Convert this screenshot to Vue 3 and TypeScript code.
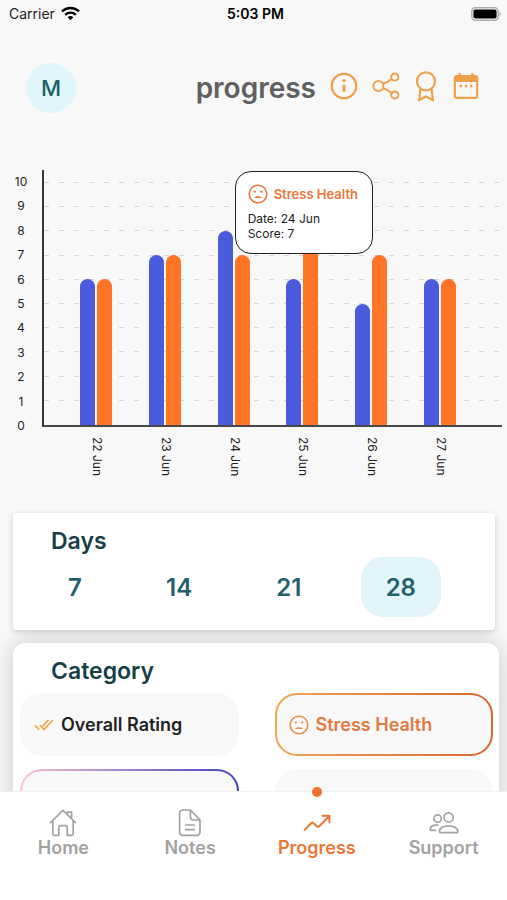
<script setup lang="ts">
import { ref } from 'vue'

interface DayEntry {
  date: string
  overall: number
  stress: number
}

const maxScore = 10
const ticks: number[] = Array.from({ length: maxScore + 1 }, (_, i) => maxScore - i)

const entries: DayEntry[] = [
  { date: '22 Jun', overall: 6, stress: 6 },
  { date: '23 Jun', overall: 7, stress: 7 },
  { date: '24 Jun', overall: 8, stress: 7 },
  { date: '25 Jun', overall: 6, stress: 8 },
  { date: '26 Jun', overall: 5, stress: 7 },
  { date: '27 Jun', overall: 6, stress: 6 },
]

const dayRanges: number[] = [7, 14, 21, 28]
const selectedRange = ref(28)
const selectedDate = ref('24 Jun')

const barHeight = (score: number) => ({ height: `${(score / maxScore) * 100}%` })
</script>

<template>
  <div class="app">
    <div class="status">
      <span class="carrier">
        Carrier
        <svg width="19" height="15" viewBox="0 0 19 15" fill="none" stroke="#000" stroke-width="2.4" aria-hidden="true">
          <path d="M1 5.4a12.2 12.2 0 0 1 17 0" />
          <path d="M4.2 8.8a7.6 7.6 0 0 1 10.6 0" />
          <path d="M9.5 14.2 6.6 11.3a4.2 4.2 0 0 1 5.8 0z" fill="#000" stroke="none" />
        </svg>
      </span>
      <span class="time">5:03 PM</span>
      <svg class="battery" width="31" height="14" viewBox="0 0 31 14" aria-hidden="true">
        <rect x="0.8" y="0.8" width="26.4" height="12.4" rx="3.6" fill="#fff" stroke="#aaa" stroke-width="1.4" />
        <rect x="2.4" y="2.4" width="23.2" height="9.2" rx="2" fill="#000" />
        <path d="M28.6 4.8c1.6.4 1.6 4 0 4.4z" fill="#aaa" />
      </svg>
    </div>

    <main class="content">
      <header class="header">
        <button class="avatar" type="button" aria-label="Profile">M</button>
        <h1 class="title">progress</h1>
        <div class="actions">
          <button type="button" aria-label="Information">
            <svg width="28" height="28" viewBox="0 0 28 28" fill="none" stroke="currentColor" stroke-width="2.2">
              <circle cx="14" cy="14" r="12.2" />
              <path d="M14 12.6v7.4" stroke-width="2.8" />
              <circle cx="14" cy="8.6" r="1.6" fill="currentColor" stroke="none" />
            </svg>
          </button>
          <button type="button" aria-label="Share">
            <svg width="28" height="28" viewBox="0 0 28 28" fill="none" stroke="currentColor" stroke-width="2">
              <circle cx="6.4" cy="14" r="5" />
              <circle cx="22.8" cy="5" r="3.6" />
              <circle cx="22.8" cy="23" r="3.6" />
              <path d="M11 11.8l4-1.6 4.8-3.2M11 16.2l4 1.6 4.8 3.2" />
            </svg>
          </button>
          <button type="button" aria-label="Awards">
            <svg width="24" height="32" viewBox="0 0 24 32" fill="none" stroke="currentColor" stroke-width="2.2">
              <circle cx="12" cy="11.4" r="9" />
              <path d="M6.4 18.6 5.2 30l6.8-3.4 6.8 3.4-1.2-11.4" />
            </svg>
          </button>
          <button type="button" aria-label="Calendar">
            <svg width="28" height="28" viewBox="-1 0 28 28" fill="none" stroke="currentColor" stroke-width="2.2">
              <rect x="1.8" y="4" width="22.4" height="21.8" rx="2" />
              <path d="M1.4 4h23.2v6H1.4z" fill="currentColor" stroke="none" />
              <path d="M6.6 1v4M19.4 1v4" />
              <path d="M6.6 14h2.4M11.8 14h2.4M17 14h2.4" stroke-width="2.4" />
            </svg>
          </button>
        </div>
      </header>

      <section class="chart" aria-label="Daily scores">
        <div class="y-axis">
          <span v-for="tick in ticks" :key="tick">{{ tick }}</span>
        </div>
        <div class="plot">
          <div class="grid-lines">
            <i v-for="tick in ticks" :key="tick" :class="{ base: tick === 0 }"></i>
          </div>
          <div class="groups">
            <div v-for="entry in entries" :key="entry.date" class="group" @click="selectedDate = entry.date">
              <div class="bar overall" :style="barHeight(entry.overall)"></div>
              <div class="bar stress" :style="barHeight(entry.stress)"></div>
              <div v-if="entry.date === selectedDate" class="tooltip">
                <div class="tooltip-title">
                  <svg width="20" height="20" viewBox="0 0 20 20" fill="none" stroke="currentColor" stroke-width="1.6">
                    <circle cx="10" cy="10" r="8.8" />
                    <circle cx="6.8" cy="7.6" r="1.2" fill="currentColor" stroke="none" />
                    <circle cx="13.2" cy="7.6" r="1.2" fill="currentColor" stroke="none" />
                    <path d="M6.2 14c1-1.6 2.4-1.8 3.8-1.8s2.8.2 3.8 1.8z" fill="currentColor" stroke="none" />
                  </svg>
                  Stress Health
                </div>
                <div>Date: {{ entry.date }}</div>
                <div>Score: {{ entry.stress }}</div>
              </div>
            </div>
          </div>
        </div>
        <div class="x-axis">
          <span v-for="entry in entries" :key="entry.date">{{ entry.date }}</span>
        </div>
      </section>

      <section class="card days">
        <h2>Days</h2>
        <div class="ranges">
          <button
            v-for="range in dayRanges"
            :key="range"
            type="button"
            :class="{ active: range === selectedRange }"
            :aria-pressed="range === selectedRange"
            @click="selectedRange = range"
          >
            {{ range }}
          </button>
        </div>
      </section>

      <section class="card category">
        <h2>Category</h2>
        <div class="categories">
          <button class="pill" type="button">
            <svg width="20" height="14" viewBox="0 0 20 14" fill="none" stroke="#eda63f" stroke-width="1.6">
              <path d="M1 7.4l4.4 4.4M5.8 7.2l4.2 4.4L19 2M8.4 8.4 14.4 2" />
            </svg>
            Overall Rating
          </button>
          <button class="pill orange" type="button" aria-pressed="true">
            <svg width="20" height="20" viewBox="0 0 20 20" fill="none" stroke="#e68f42" stroke-width="1.6">
              <circle cx="10" cy="10" r="8.8" />
              <circle cx="6.8" cy="7.6" r="1.1" fill="#e68f42" stroke="none" />
              <circle cx="13.2" cy="7.6" r="1.1" fill="#e68f42" stroke="none" />
              <path d="M6.2 14c1-1.6 2.4-1.8 3.8-1.8s2.8.2 3.8 1.8z" fill="#e68f42" stroke="none" />
            </svg>
            Stress Health
          </button>
          <button class="pill blue" type="button" aria-label="More"></button>
          <button class="pill" type="button" aria-label="More"></button>
        </div>
      </section>
    </main>

    <nav class="tabs">
      <a href="#home">
        <svg width="28" height="28" viewBox="0 0 28 28" fill="none" stroke="currentColor" stroke-width="1.7" stroke-linejoin="round" stroke-linecap="round">
          <path d="M1.4 13.6 14 1.4l12.6 12.2M3.8 11.6v13.2c0 1 .6 1.6 1.6 1.6h4.4v-8c0-1.2.6-1.8 1.8-1.8h4.8c1.2 0 1.8.6 1.8 1.8v8h4.4c1 0 1.6-.6 1.6-1.6V11.6M18.6 5.6V3.2h4v6.4" />
        </svg>
        Home
      </a>
      <a href="#notes">
        <svg width="28" height="28" viewBox="0 0 28 28" fill="none" stroke="currentColor" stroke-width="1.7" stroke-linejoin="round" stroke-linecap="round">
          <path d="M14.4 1H7.2C5 1 3.6 2.4 3.6 4.6v18.2c0 2.2 1.4 3.6 3.6 3.6h13.2c2.2 0 3.6-1.4 3.6-3.6V11zM14.4 1v7c0 2 1 3 3 3H24M9.6 16h8.8M9.6 20.6h8.8" />
        </svg>
        Notes
      </a>
      <a href="#progress" class="current" aria-current="page">
        <svg width="28" height="28" viewBox="0 0 28 28" fill="none" stroke="currentColor" stroke-width="2" stroke-linejoin="round">
          <path d="M1 21.6l7.2-7.4c.8-.8 1.4-.8 2.2 0l3.4 3c.8.8 1.6.8 2.4 0L26.4 7M18.8 6.8h7.6v7.4" />
        </svg>
        Progress
      </a>
      <a href="#support">
        <svg width="30" height="28" viewBox="0 0 30 28" fill="none" stroke="currentColor" stroke-width="1.7" stroke-linejoin="round" stroke-linecap="round">
          <circle cx="19.6" cy="8.4" r="4.6" />
          <circle cx="8.6" cy="9.6" r="3.7" />
          <path d="M11.4 23.6c-.8 0-1-.4-1-1.2.2-3.4 4.2-5.6 9.2-5.6s9 2.2 9.2 5.6c0 .8-.2 1.2-1 1.2zM6.6 21.4H2.2c-.8 0-1-.4-1-1 .2-3 3.4-4.4 7.4-4.2" />
        </svg>
        Support
      </a>
    </nav>
  </div>
</template>

<style>
body {
  background: #f8f8f8;
}
</style>

<style scoped>
* {
  box-sizing: border-box;
}

.app {
  display: flex;
  flex-direction: column;
  height: 100vh;
  background: #f8f8f8;
  color: #222;
  font-family: Inter, 'Liberation Sans', sans-serif;
}

button {
  padding: 0;
  border: 0;
  background: none;
  font-family: inherit;
  cursor: pointer;
}

svg {
  display: block;
  flex: none;
}

h1,
h2 {
  margin: 0;
}

.status {
  display: grid;
  grid-template-columns: 1fr auto 1fr;
  align-items: center;
  flex: none;
  height: 27px;
  padding: 0 5px 0 9px;
  font-size: 14px;
}

.carrier {
  display: flex;
  align-items: center;
  gap: 6px;
}

.time {
  font-weight: 600;
  color: #000;
}

.battery {
  justify-self: end;
}

.content {
  flex: 1;
  min-height: 0;
  overflow-y: auto;
  scrollbar-width: none;
}

.header {
  display: flex;
  align-items: center;
  padding: 36px 27px 0 26px;
}

.avatar {
  width: 50px;
  height: 50px;
  border-radius: 50%;
  background: #e0f5fc;
  color: #206068;
  font-size: 22px;
  font-weight: 500;
}

.title {
  margin-left: auto;
  color: #606060;
  font-size: 28px;
  font-weight: 600;
  line-height: 48px;
}

.actions {
  display: flex;
  align-items: center;
  gap: 14px;
  margin-left: 14px;
  height: 46px;
  align-self: flex-start;
}

.actions button {
  color: #eea04a;
}

.chart {
  display: grid;
  grid-template-columns: 42px 1fr;
  padding: 57px 5px 0 0;
}

.y-axis {
  display: flex;
  flex-direction: column;
  justify-content: space-between;
  height: 268px;
  margin-bottom: -12px;
  font-size: 12px;
  line-height: 24px;
  text-align: center;
}

.plot {
  display: grid;
  height: 257px;
  padding-top: 12px;
  border-left: 2px solid #3a3636;
  border-bottom: 2px solid #484848;
}

.grid-lines,
.groups {
  grid-area: 1 / 1;
}

.grid-lines {
  display: flex;
  flex-direction: column;
  justify-content: space-between;
}

.grid-lines i {
  height: 1px;
  background: repeating-linear-gradient(90deg, #d6d6d6 0 5px, transparent 5px 15px);
}

.grid-lines i.base {
  background: none;
}

.groups,
.x-axis {
  display: grid;
  grid-template-columns: repeat(6, 1fr);
  padding: 0 28px 0 18px;
}

.group {
  position: relative;
  display: flex;
  justify-content: center;
  align-items: flex-end;
  gap: 2px;
}

.bar {
  width: 15px;
  border-radius: 8px 8px 0 0;
}

.overall {
  background: #4a5bdc;
}

.stress {
  background: #ff7425;
}

.tooltip {
  position: absolute;
  z-index: 1;
  top: -11px;
  left: 50%;
  width: 138px;
  margin-left: 1px;
  padding: 12px;
  border: 1px solid #222;
  border-radius: 16px;
  background: #fff;
  font-size: 12px;
  line-height: 15px;
}

.tooltip-title {
  display: flex;
  align-items: center;
  gap: 6px;
  margin-bottom: 7px;
  color: #ee7636;
  font-size: 13px;
  font-weight: 600;
  line-height: 20px;
  white-space: nowrap;
}

.x-axis {
  grid-column: 2;
  justify-items: center;
  padding-top: 10px;
  padding-left: 21px;
  padding-right: 27px;
  font-size: 12px;
  line-height: 14px;
}

.x-axis span {
  writing-mode: vertical-rl;
}

.card {
  background: #fff;
}

.card h2 {
  padding-left: 38px;
  color: #173f45;
  font-size: 23px;
  font-weight: 600;
  line-height: 30px;
}

.days {
  position: relative;
  margin: 37px 12px 0 13px;
  padding: 13px 0;
  border-radius: 4px;
  box-shadow: 0 2px 6px rgba(0, 0, 0, 0.18);
}

.ranges {
  display: flex;
  justify-content: space-between;
  margin: 1px 54px 0 30px;
}

.ranges button {
  height: 60px;
  padding: 0 25px;
  border-radius: 22px;
  color: #23606c;
  font-size: 24px;
  font-weight: 600;
}

.ranges .active {
  background: #e1f4fa;
}

.category {
  margin: 13px 8px 0 13px;
  padding: 13px 6px 20px 7px;
  border-radius: 12px;
  box-shadow: 0 0 22px rgba(0, 0, 0, 0.2);
}

.category h2 {
  padding-left: 31px;
}

.categories {
  display: grid;
  grid-template-columns: 1fr 1fr;
  gap: 13px 36px;
  margin-top: 7px;
}

.pill {
  display: flex;
  align-items: center;
  gap: 7px;
  height: 63px;
  padding: 0 12px;
  border: 2px solid transparent;
  border-radius: 22px;
  background: #f8f8f8;
  color: #222;
  font-size: 18px;
  font-weight: 600;
  white-space: nowrap;
}

.orange {
  background:
    linear-gradient(#f8f8f8, #f8f8f8) padding-box,
    linear-gradient(90deg, #eda94e, #d9652f) border-box;
  color: #e17a40;
}

.blue {
  background:
    linear-gradient(#f8f8f8, #f8f8f8) padding-box,
    linear-gradient(90deg, #f7c3d2, #4340bd) border-box;
}

.tabs {
  position: relative;
  z-index: 2;
  display: grid;
  grid-template-columns: repeat(4, 1fr);
  flex: none;
  height: 109px;
  border-top: 1px solid #f2f2f2;
  background: #fff;
}

.tabs a {
  position: relative;
  display: flex;
  flex-direction: column;
  align-items: center;
  padding-top: 17px;
  color: #a2a2a2;
  font-size: 18px;
  font-weight: 600;
  line-height: 22px;
  text-decoration: none;
}

.tabs .current {
  color: #e97836;
}

.current::before {
  content: '';
  position: absolute;
  top: -5px;
  width: 10px;
  height: 10px;
  border-radius: 50%;
  background: #f37329;
}
</style>
